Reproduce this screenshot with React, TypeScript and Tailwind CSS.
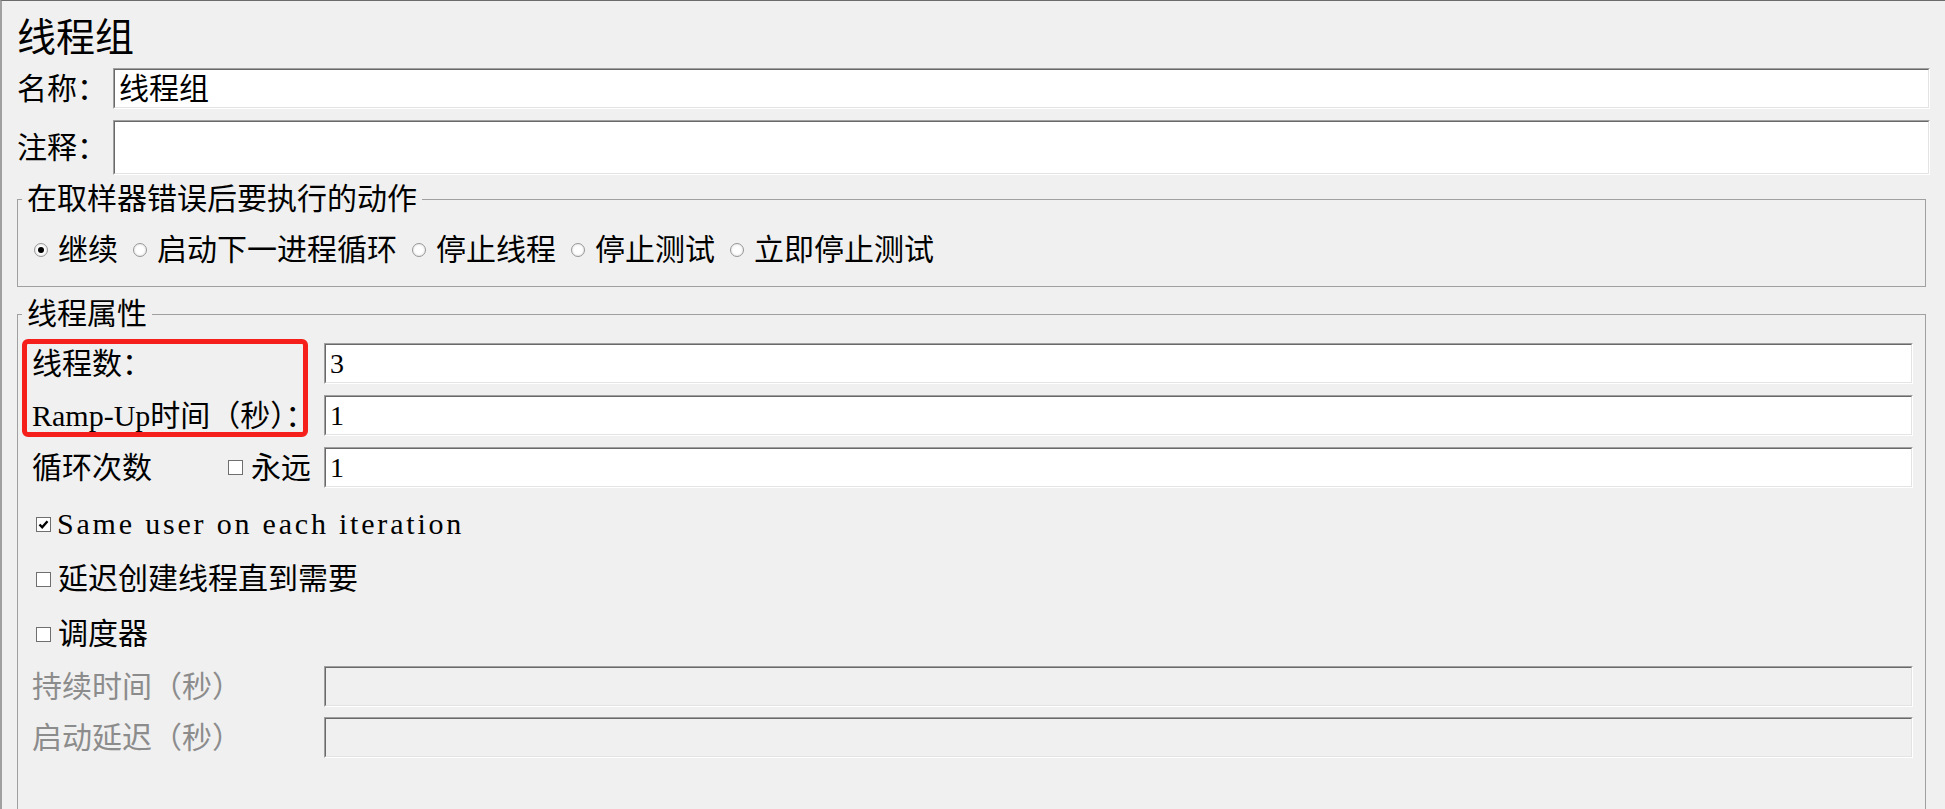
import React from 'react';

type BoxProps = {
    value?: string;
    disabled?: boolean;
    className?: string;
};

// Sunken Swing-style text field: light/dark bevel on top-left, pale on bottom-right
const TextBox: React.FC<BoxProps> = ({ value = '', disabled = false, className = '' }) => (
    <div className={`flex-1 border border-t-[#a0a0a0] border-l-[#a0a0a0] border-b-white border-r-white ${className}`}>
        <div
            className={`h-full flex items-center pl-[4px] border border-t-[#696969] border-l-[#696969] border-b-[#e3e3e3] border-r-[#e3e3e3] ${disabled ? 'bg-[#f0f0f0]' : 'bg-white'}`}
        >
            {value}
        </div>
    </div>
);

const CheckBox: React.FC<{ checked?: boolean }> = ({ checked = false }) => (
    <span className="w-[15px] h-[15px] border border-[#6f6f6f] bg-white flex items-center justify-center shrink-0">
        {checked && (
            <svg viewBox="0 0 11 11" className="w-[11px] h-[11px]">
                <path d="M1.5 5.5 L4.2 8.3 L9.5 2.2" stroke="#000" strokeWidth="2.4" fill="none" />
            </svg>
        )}
    </span>
);

const Radio: React.FC<{ checked?: boolean }> = ({ checked = false }) => (
    <span className="w-[14px] h-[14px] rounded-full border border-[#979797] bg-[radial-gradient(circle,#ffffff_40%,#dcdcdc)] flex items-center justify-center shrink-0">
        {checked && <span className="w-[6px] h-[6px] rounded-full bg-black" />}
    </span>
);

const actions = ['继续', '启动下一进程循环', '停止线程', '停止测试', '立即停止测试'];

export default function App() {
    return (
        <div className="w-[1945px] h-[809px] overflow-hidden bg-[#f0f0f0] border-t border-t-[#6b6b6b] border-l-2 border-l-[#a0a0a0] pl-[15px] pr-[15px] text-black font-['Liberation_Serif','Noto_Sans_CJK_SC',serif]">
            {/* Title */}
            <div className="h-[67px] pt-[15px] text-[39px] leading-[44px]">线程组</div>

            {/* Name / comment */}
            <div className="flex items-center h-[41px]">
                <div className="w-[96px] text-[30px] leading-none">名称：</div>
                <TextBox value="线程组" className="h-full text-[30px] leading-none" />
            </div>
            <div className="flex items-center h-[55px] mt-[11px]">
                <div className="w-[96px] text-[30px] leading-none">注释：</div>
                <TextBox className="h-full" />
            </div>

            {/* Sampler error action */}
            <fieldset className="mt-[7px] mr-[4px] border border-[#a0a0a0] pt-[19px] pb-[21px]">
                <legend className="ml-[4px] px-[5px] text-[30px] leading-[34px]">在取样器错误后要执行的动作</legend>
                <div className="flex items-center h-[30px] pl-[16px] gap-x-[15px] text-[30px] leading-none">
                    {actions.map((a, i) => (
                        <div key={i} className="flex items-center gap-[10px]">
                            <Radio checked={i === 0} />
                            <span>{a}</span>
                        </div>
                    ))}
                </div>
            </fieldset>

            {/* Thread properties */}
            <fieldset className="mt-[10px] mr-[4px] border border-[#a0a0a0] pt-[12px] pr-[12px] pb-[120px]">
                <legend className="ml-[4px] px-[5px] text-[30px] leading-[34px]">线程属性</legend>

                <div className="relative">
                    <div className="flex items-center h-[41px]">
                        <div className="w-[306px] pl-[14px] text-[30px] leading-none">线程数：</div>
                        <TextBox value="3" className="h-full text-[28px] leading-none" />
                    </div>
                    <div className="flex items-center h-[41px] mt-[11px]">
                        <div className="w-[306px] pl-[14px] text-[30px] leading-none whitespace-nowrap">
                            <span className="text-[30px]">Ramp-Up</span>时间（秒）：
                        </div>
                        <TextBox value="1" className="h-full text-[28px] leading-none" />
                    </div>

                    {/* highlight around the first two labels */}
                    <div className="absolute left-[4px] -top-[4px] w-[286px] h-[98px] border-[5px] border-[#f5201c] rounded-[6px] pointer-events-none" />
                </div>

                <div className="flex items-center h-[41px] mt-[11px]">
                    <div className="w-[306px] pl-[14px] pr-[13px] flex items-center text-[30px] leading-none">
                        <span>循环次数</span>
                        <span className="ml-auto flex items-center gap-[8px]">
                            <CheckBox />
                            <span>永远</span>
                        </span>
                    </div>
                    <TextBox value="1" className="h-full text-[28px] leading-none" />
                </div>

                <div className="flex items-center h-[30px] mt-[21px] pl-[18px] gap-[6px] leading-none">
                    <CheckBox checked />
                    <span className="text-[30px] tracking-[2.8px]">Same user on each iteration</span>
                </div>
                <div className="flex items-center h-[30px] mt-[25px] pl-[18px] gap-[7px] text-[30px] leading-none">
                    <CheckBox />
                    <span>延迟创建线程直到需要</span>
                </div>
                <div className="flex items-center h-[30px] mt-[25px] pl-[18px] gap-[7px] text-[30px] leading-none">
                    <CheckBox />
                    <span>调度器</span>
                </div>

                <div className="flex items-center h-[41px] mt-[17px]">
                    <div className="w-[306px] pl-[14px] text-[30px] leading-none text-[#8c8c8c]">持续时间（秒）</div>
                    <TextBox disabled className="h-full" />
                </div>
                <div className="flex items-center h-[41px] mt-[10px]">
                    <div className="w-[306px] pl-[14px] text-[30px] leading-none text-[#8c8c8c]">启动延迟（秒）</div>
                    <TextBox disabled className="h-full" />
                </div>
            </fieldset>
        </div>
    );
}
